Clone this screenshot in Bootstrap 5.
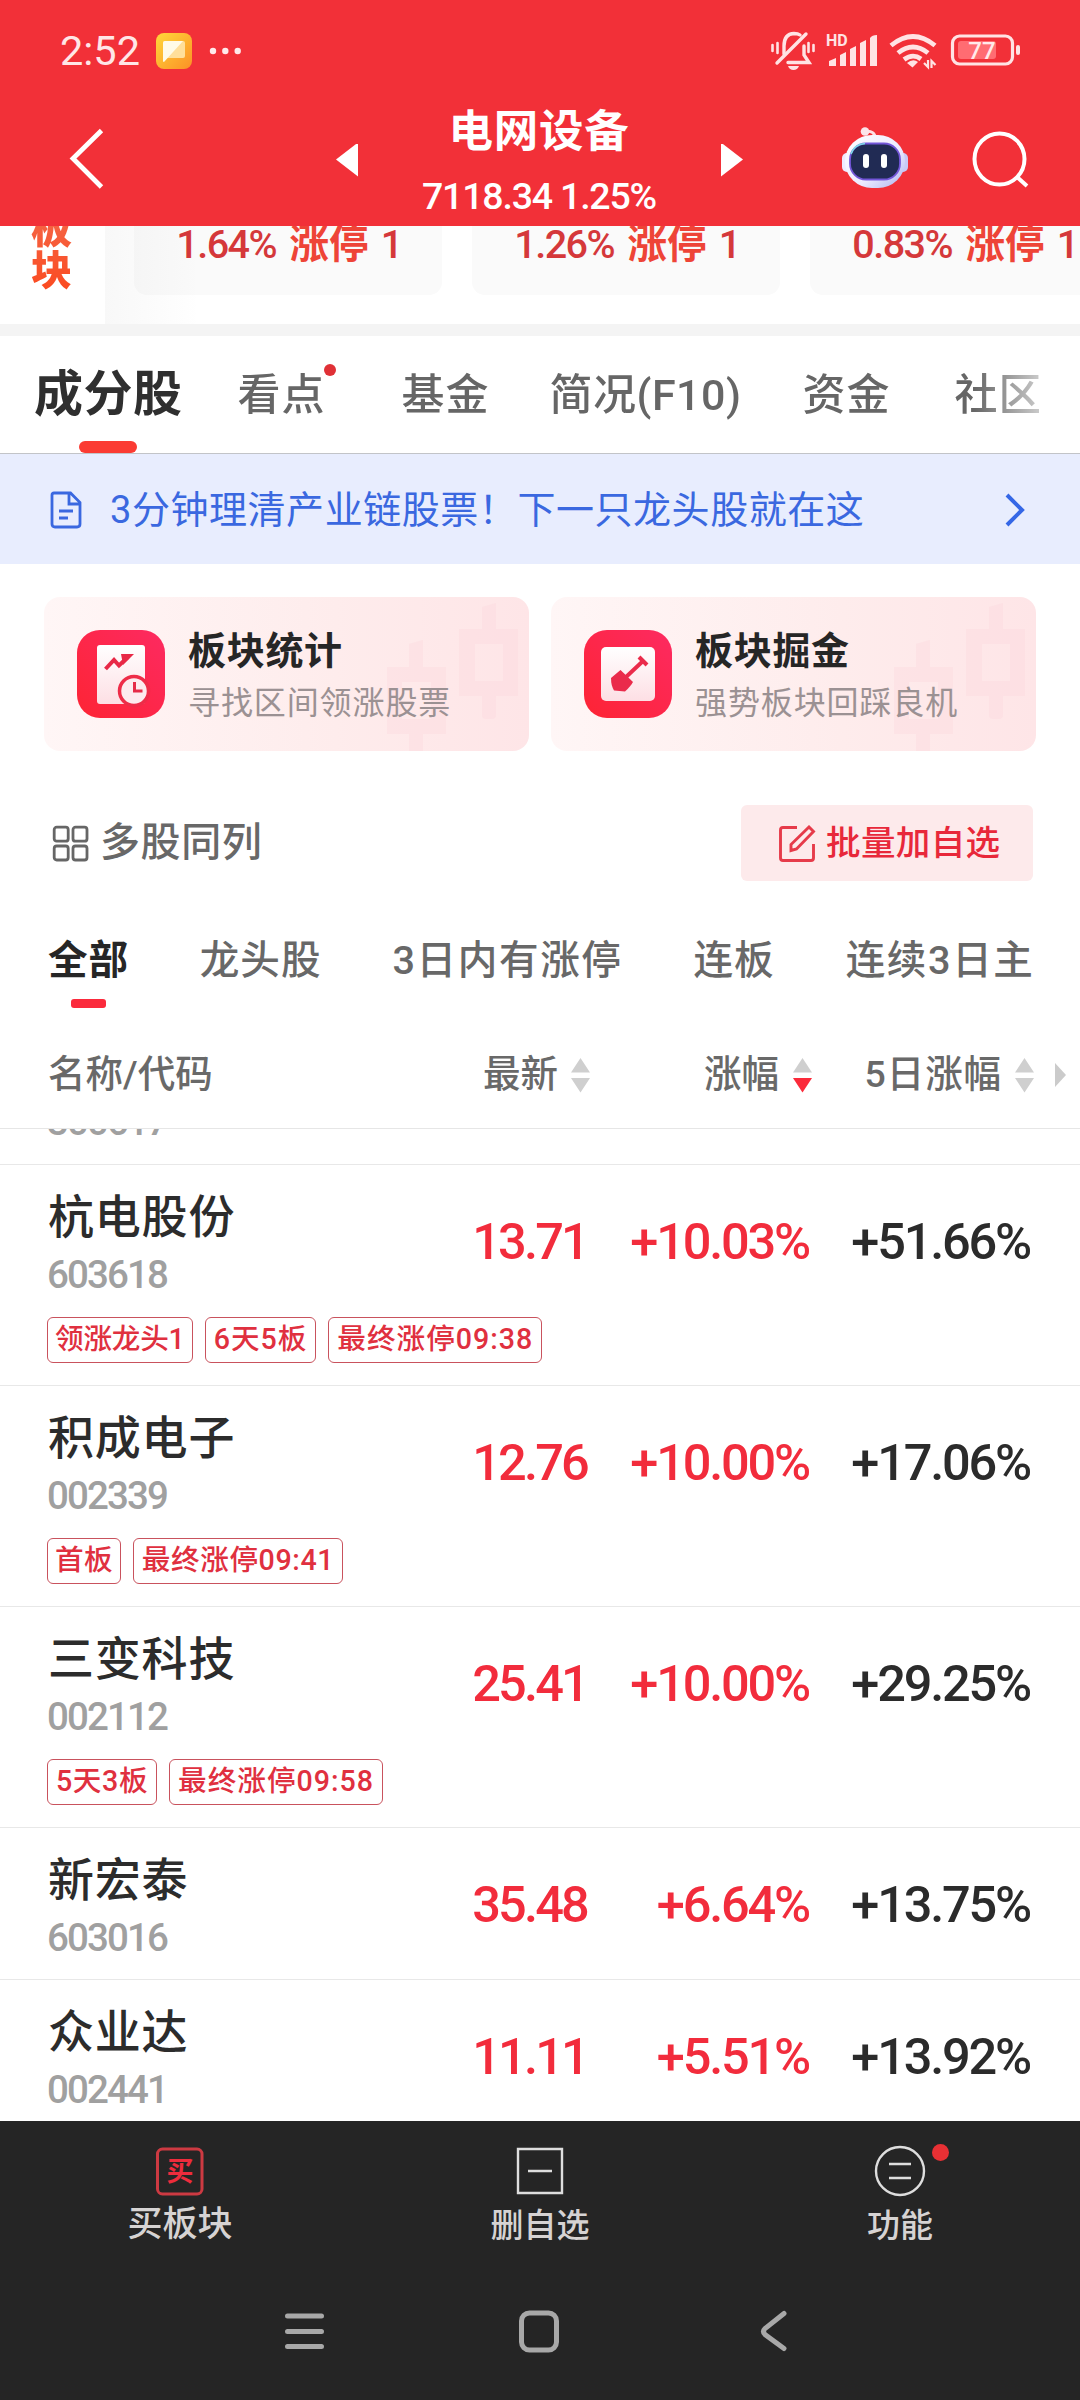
<!DOCTYPE html>
<html lang="zh-CN">
<head>
<meta charset="utf-8">
<meta name="viewport" content="width=device-width, initial-scale=1">
<title>电网设备</title>
<link href="https://cdn.jsdelivr.net/npm/bootstrap@5.3.0/dist/css/bootstrap.min.css" rel="stylesheet">
<style>
  body{font-family:Roboto,"Noto Sans CJK SC",sans-serif;width:1080px;height:2400px;overflow:hidden;color:#2b2b2b;background:#fff;white-space:nowrap}
  svg{display:block;flex:none}
  .app{width:1080px;height:2400px;overflow:hidden}
  .top-area{background:#f23038;height:226px;flex:none;color:#fff}
  .status{height:98px;padding:3px 60px 0 60px}
  .clock{font-size:41.5px;line-height:50px;color:#ffe6e7;width:96px}
  .title-row{height:128px;padding-left:64px}
  .title-col{width:250px;margin:0 57px 0 56px}
  .title-main{font-size:44.5px;line-height:64px;font-weight:700;letter-spacing:.8px;padding-top:3px}
  .title-sub{font-size:37.5px;line-height:64px;font-weight:500;letter-spacing:-1.2px}
  .strip{height:98px;flex:none;position:relative}
  .strip-label{width:105px;padding-left:31px;font-size:41px;line-height:42px;font-weight:900;margin-top:-18px;height:84px;white-space:normal;flex:none}
  .strip-label span{display:block;width:42px;background:linear-gradient(#f4684a,#fb4a20);-webkit-background-clip:text;color:transparent}
  .strip-card{width:308px;height:69px;background:#fafafa;border-radius:0 0 13px 13px;text-align:center;font-size:39.5px;line-height:38px;color:#d5383a;letter-spacing:-1.5px;flex:none;font-weight:500;overflow:hidden;padding-left:2px}
  .strip-card b{color:#ee4437;font-weight:700;letter-spacing:0;margin:0 4px 0 5px}
  .strip-shade{position:absolute;left:105px;top:0;width:95px;height:98px;background:linear-gradient(90deg,rgba(120,120,120,.05),rgba(120,120,120,0));pointer-events:none}
  .divider-band{height:12px;background:#f4f4f4;flex:none}
  .tabs-main{height:118px;border-bottom:1px solid #c2c4c8;flex:none;padding-left:34px;width:1080px}
  .tabs-clip{width:1005px;overflow:hidden;height:117px;-webkit-mask-image:linear-gradient(90deg,#000 940px,rgba(0,0,0,.35) 1005px);mask-image:linear-gradient(90deg,#000 940px,rgba(0,0,0,.35) 1005px)}
  .tab-i{font-size:43px;letter-spacing:1px;line-height:60px;margin-top:29px;color:#666;font-weight:500;position:relative;flex:none}
  .tab-i.on{font-size:49px;font-weight:700;color:#2f2f2f;letter-spacing:.5px}
  .tab-i.on:after{content:"";position:absolute;left:45px;top:76px;width:58px;height:12px;border-radius:6px;background:#fb3b33}
  .dot-s{position:absolute;width:12px;height:12px;border-radius:50%;background:#e03036;right:-10px;top:-1px}
  .banner-b{height:110px;background:#e8edfe;color:#3a68e0;font-size:38px;letter-spacing:.55px;flex:none;padding:2px 54px 0 50px}
  .promo{width:485px;height:154px;border-radius:16px;background:linear-gradient(90deg,#fff6f6,#feecec 60%,#fee5e7);position:relative;padding-left:33px}
  .promo .wm{position:absolute;right:0;top:0}
  .promo-t{font-size:38px;letter-spacing:.7px;font-weight:700;line-height:52px;color:#262626}
  .promo-s{font-size:32px;letter-spacing:.9px;line-height:52px;color:#9b9193}
  .tools{height:76px;padding:0 47px 0 52px;margin-top:54px;flex:none}
  .multi{font-size:40px;letter-spacing:.6px;color:#686868;font-weight:500}
  .btn-add{width:292px;height:76px;background:#fdeaeb;border-radius:6px;color:#e8283a;font-size:34.5px;font-weight:500;letter-spacing:.4px;border:0;padding:2px 0 0 37px}
  .filters{height:104px;padding-left:48px;margin-top:50px;flex:none;gap:71px;font-size:39.6px;letter-spacing:1px;line-height:60px;color:#686868;font-weight:500}
  .filters .wide{letter-spacing:1.6px}
  .filters .on{font-weight:700;color:#262626;position:relative;letter-spacing:.8px}
  .filters .on:after{content:"";position:absolute;left:23px;top:68px;width:35px;height:9px;border-radius:3px;background:#fb2a3c}
  .thead{height:94px;border-bottom:1px solid #e6e6e6;font-size:37.5px;color:#696969;flex:none;padding-left:48px;padding-bottom:14px;font-weight:500}
  .c1{width:292px;text-align:right}.c2{width:222px;text-align:right}.c3{width:222px;text-align:right}
  .prev-row{height:36px;border-bottom:1px solid #e8e8e8;overflow:hidden;flex:none}
  .stk{border-bottom:1px solid #e8e8e8;padding:22px 0 0 48px;height:152px;flex:none}
  .stk.tall{height:221px}
  .n1{font-size:46px;letter-spacing:.8px;line-height:60px;font-weight:500;color:#2c2c2c;width:250px}
  .n2{font-size:38.5px;line-height:54px;color:#a0a0a0;letter-spacing:-1.9px;font-weight:500;padding-top:1px;margin-left:-1px}
  .num{font-size:50.5px;font-weight:500;letter-spacing:-2.2px;line-height:60px;padding:0 4px 5px 0;color:#2b2b2b}
  .num.c1,.num.c2{color:#f22c3c}
  .stk .num.c1{width:294px;letter-spacing:-2.8px;padding-right:5px}
  .stk .num.c2{width:220px;padding-right:3px}
  .pill{border:1.5px solid #c9525d;border-radius:6px;height:46px;line-height:42px;padding:0 8px;font-size:28.6px;color:#e0303f;letter-spacing:1px;font-weight:500}
  .pill.cj{letter-spacing:.3px;padding:0 7px}
  .pill.lead1{letter-spacing:-.2px;padding:0 7px}
  .bottom{background:#252525;height:279px;position:absolute;left:0;top:2121px;width:1080px}
  .bt{width:360px;color:#d6d3d3;font-weight:500;position:relative}
  .bt div{line-height:44px}
</style>
</head>
<body>
<div class="app d-flex flex-column position-relative">
  <header class="top-area">
    <div class="status d-flex align-items-center">
      <span class="clock">2:52</span>
      <svg width="36" height="36" viewBox="0 0 36 36"><defs><linearGradient id="ye" x1="0" y1="0" x2="1" y2="1"><stop offset="0" stop-color="#ffd83a"/><stop offset="1" stop-color="#fc9026"/></linearGradient></defs><rect width="36" height="36" rx="8" fill="url(#ye)"/><rect x="7" y="8" width="22" height="17" rx="2" fill="#ffdf9a"/><path d="M9 8h18L8 29q-1 0-1-1V10q0-2 2-2z" fill="#fffbe8"/></svg>
      <svg class="ms-3" width="36" height="8" viewBox="0 0 36 8"><g fill="#ffe9ea"><circle cx="5" cy="4" r="3.2"/><circle cx="17.3" cy="4" r="3.2"/><circle cx="29.7" cy="4" r="3.2"/></g></svg>
      <svg class="ms-auto" width="250" height="44" viewBox="770 29 250 44">
        <g stroke="#ffe3e4" fill="none" stroke-width="3.4" stroke-linecap="round">
          <path d="M784 54V46q0-12 10-12.500q4 0 6 1.500M804 46v9l5 7.500H788"/><path d="M777 63L806 34"/>
          <path d="M772.500 45v6M777.500 43v10M808.500 43v9M813.500 45v6" stroke-width="2.600"/>
        </g>
        <path d="M788 66h11q-1.500 4-5.500 4t-5.500-4z" fill="#ffe3e4"/>
        <text x="826" y="46" font-family="Roboto" font-weight="700" font-size="16" fill="#ffe3e4">HD</text>
        <g fill="#ffe3e4"><path d="M829 61l7-3v8h-7zM840 55l6-3v14h-6zM850 49l6-3v20h-6zM860 43l6-3v26h-6zM870 38q2-3 7-3v31h-7z"/></g>
        <g fill="none" stroke="#ffe3e4" stroke-width="4.800"><path d="M891 45.500Q913 27.500 935 45.500"/><path d="M898 53Q913 41 928 53"/><path d="M904 59.500Q913 53 921 59"/></g>
        <path d="M907 63q6-5 11-1l-5.500 5.500z" fill="#ffe3e4"/><path d="M928 60v7l-4-4M931.500 68v-7l4 4" stroke="#ffe3e4" stroke-width="2.200" fill="none"/>
        <rect x="952.500" y="36" width="60" height="28" rx="7" fill="none" stroke="#ffe3e4" stroke-width="3.200"/>
        <rect x="958" y="41" width="38" height="18" rx="3" fill="#ff6c72"/><rect x="1016" y="45" width="4" height="10" rx="2" fill="#ffe3e4"/>
        <text x="982" y="59" text-anchor="middle" font-family="Roboto" font-weight="500" font-size="24" fill="#ffe9ea">77</text>
      </svg>
    </div>
    <div class="title-row d-flex align-items-center">
      <svg width="46" height="80" viewBox="64 122 46 80"><path d="M101.500 130.500L73 158.500L101.500 187" fill="none" stroke="#fff" stroke-width="4.800"/></svg>
      <svg width="22" height="36" viewBox="0 0 22 36" style="margin-left:226px"><path d="M0 15.500L22-1.500v34z" fill="#fff"/></svg>
      <div class="title-col text-center">
        <div class="title-main">电网设备</div>
        <div class="title-sub">7118.34 1.25%</div>
      </div>
      <svg width="22" height="36" viewBox="0 0 22 36"><path d="M22 15.500L0-1.500v34z" fill="#fff"/></svg>
      <svg width="68" height="72" viewBox="0 0 68 72" style="margin-left:98px"><defs><linearGradient id="rb" x1="0" y1="0" x2="1" y2="1"><stop offset="0" stop-color="#fff"/><stop offset=".6" stop-color="#eceaff"/><stop offset="1" stop-color="#aab2ee"/></linearGradient></defs>
        <path d="M24 5.500Q34 4 34.500 13" fill="none" stroke="#ffdfe4" stroke-width="3"/><circle cx="24" cy="5.500" r="4.300" fill="#fbe4ea"/>
        <rect x="1" y="27" width="10" height="19" rx="5" fill="#eeeaff"/><rect x="57" y="27" width="10" height="19" rx="5" fill="#c8c9f6"/>
        <rect x="4" y="9" width="60" height="53" rx="27" fill="url(#rb)"/>
        <rect x="9" y="17.500" width="50" height="36" rx="16" fill="#212b54" stroke="#7356d8" stroke-width="1.800"/><path d="M10 28Q13 18.500 24 17.500" stroke="#7bdde5" stroke-width="1.500" fill="none"/>
        <rect x="22" y="28" width="6" height="14" rx="3" fill="#fff"/><rect x="40" y="28" width="6" height="14" rx="3" fill="#fff"/></svg>
      <svg width="64" height="72" viewBox="0 0 64 72" style="margin-left:59px"><ellipse cx="31.500" cy="33" rx="25" ry="25.500" fill="none" stroke="#fff" stroke-width="4"/><path d="M49 51l10 9" stroke="#fff" stroke-width="4"/></svg>
    </div>
  </header>

  <section class="strip d-flex overflow-hidden">
    <div class="strip-label"><span>板<br>块</span></div>
    <div class="d-flex" style="gap:30px;margin-left:29px">
      <div class="strip-card">1.64% <b>涨停</b> 1</div>
      <div class="strip-card">1.26% <b>涨停</b> 1</div>
      <div class="strip-card">0.83% <b>涨停</b> 1</div>
    </div>
    <div class="strip-shade"></div>
  </section>
  <div class="divider-band"></div>

  <nav class="tabs-main">
    <div class="tabs-clip d-flex">
      <div class="tab-i on">成分股</div>
      <div class="tab-i" style="margin-left:55px">看点<i class="dot-s"></i></div>
      <div class="tab-i" style="margin-left:76px">基金</div>
      <div class="tab-i" style="margin-left:60px;letter-spacing:.5px">简况(F10)</div>
      <div class="tab-i" style="margin-left:61px">资金</div>
      <div class="tab-i" style="margin-left:64px">社区</div>
    </div>
  </nav>

  <div class="banner-b d-flex align-items-center">
    <svg width="32" height="38" viewBox="0 0 32 38"><path d="M4 2h16.500L30 11.500V33q0 3-3 3H5q-3 0-3-3V4q0-2 2-2zM19 2v11h11M9 20h14M9 27h9" fill="none" stroke="#3a68e0" stroke-width="2.800"/></svg>
    <span style="margin-left:28px">3分钟理清产业链股票！下一只龙头股就在这</span>
    <svg class="ms-auto" width="22" height="36" viewBox="0 0 22 36"><path d="M3 3l15 15L3 33" fill="none" stroke="#3567e6" stroke-width="4"/></svg>
  </div>

  <section class="d-flex flex-shrink-0" style="gap:22px;padding:33px 44px 0">
    <div class="promo d-flex align-items-center">
      <svg class="wm" width="160" height="154" viewBox="325 0 160 154"><g fill="#fdd5d9" fill-opacity=".3"><path fill-rule="evenodd" d="M415 32h59v67h-59zM431 47h28v37h-28zM343 70h59v67h-59zM358 85h29v37h-29z"/><path d="M438 10l14-4v26h-14zM438 99h14v19q0 4-4 4h-6q-4 0-4-4zM365 47l14-4v27h-14zM365 137h14v17h-14z"/></g></svg>
      <svg width="88" height="88" viewBox="0 0 88 88"><defs><linearGradient id="rg" x1="0" y1="1" x2="1" y2="0"><stop offset="0" stop-color="#fd2434"/><stop offset="1" stop-color="#fd2a61"/></linearGradient><linearGradient id="wg" x1="0" y1="0" x2="0" y2="1"><stop offset="0" stop-color="#fff"/><stop offset="1" stop-color="#fddfe4"/></linearGradient></defs><rect width="88" height="88" rx="23" fill="url(#rg)"/><rect x="20" y="15" width="48" height="59" rx="3" fill="url(#wg)"/><path d="M28.500 39l8.500-9 5 5.500 9-8.500" fill="none" stroke="#e82947" stroke-width="4"/><path d="M44 24h13L46 35z" fill="#e82947"/><circle cx="57" cy="61" r="14.500" fill="#fdebee" stroke="#ee2c48" stroke-width="3.500"/><path d="M57.500 52v9h8" fill="none" stroke="#e52b47" stroke-width="3"/></svg>
      <div class="position-relative" style="margin-left:23px;padding-top:5px"><div class="promo-t">板块统计</div><div class="promo-s">寻找区间领涨股票</div></div>
    </div>
    <div class="promo d-flex align-items-center">
      <svg class="wm" width="160" height="154" viewBox="325 0 160 154"><g fill="#fdd5d9" fill-opacity=".3"><path fill-rule="evenodd" d="M415 32h59v67h-59zM431 47h28v37h-28zM343 70h59v67h-59zM358 85h29v37h-29z"/><path d="M438 10l14-4v26h-14zM438 99h14v19q0 4-4 4h-6q-4 0-4-4zM365 47l14-4v27h-14zM365 137h14v17h-14z"/></g></svg>
      <svg width="88" height="88" viewBox="0 0 88 88"><rect width="88" height="88" rx="23" fill="url(#rg)"/><rect x="17" y="17" width="54" height="54" rx="5" fill="url(#wg)"/><path d="M42 47L59 31" stroke="#ea2b4b" stroke-width="4"/><path d="M55 27l8 8" stroke="#ea2b4b" stroke-width="4"/><path d="M36.500 40L49 52q-2 4-8 9.500l-11-1q-3-5-3-12.500z" fill="#ea2b4b"/></svg>
      <div class="position-relative" style="margin-left:23px;padding-top:5px"><div class="promo-t">板块掘金</div><div class="promo-s">强势板块回踩良机</div></div>
    </div>
  </section>

  <div class="tools d-flex align-items-center justify-content-between">
    <div class="multi d-flex align-items-center"><svg width="37" height="37" viewBox="0 0 37 37" style="margin-right:11px"><g fill="none" stroke="#666" stroke-width="2.800"><rect x="2.200" y="2.200" width="14" height="14" rx="2.500"/><rect x="21" y="2.200" width="14" height="14" rx="2.500"/><rect x="2.200" y="21" width="14" height="14" rx="2.500"/><rect x="21" y="21" width="14" height="14" rx="2.500"/></g></svg>多股同列</div>
    <button class="btn-add d-flex align-items-center"><svg width="38" height="38" viewBox="0 0 38 38" style="margin-right:10px"><g fill="none" stroke="#e63b4a" stroke-width="2.900"><path d="M19 2.500H5q-2.500 0-2.500 2.500v28q0 2.500 2.500 2.500h28q2.500 0 2.500-2.500V19"/><path d="M13 25.500v-6L31 2l4.500 4.500L18.500 24z"/></g></svg>批量加自选</button>
  </div>

  <div class="filters d-flex">
    <span class="on">全部</span><span>龙头股</span><span class="wide">3日内有涨停</span><span>连板</span><span class="wide">连续3日主</span>
  </div>

  <div class="thead d-flex align-items-center">
    <span style="width:250px">名称/代码</span>
    <span class="c1 d-flex justify-content-end align-items-center">最新<svg width="19" height="36" viewBox="0 0 19 36" style="margin-left:13px"><path d="M9.500 1L19 15.500H0zM9.500 35.500L0 21h19z" fill="#cfcfcf"/></svg></span>
    <span class="c2 d-flex justify-content-end align-items-center">涨幅<svg width="19" height="36" viewBox="0 0 19 36" style="margin-left:14px"><path d="M9.500 1L19 15.500H0z" fill="#cfcfcf"/><path d="M9.500 35.500L0 21h19z" fill="#fb2a3a"/></svg></span>
    <span class="c3 d-flex justify-content-end align-items-center" style="letter-spacing:.9px">5日涨幅<svg width="19" height="36" viewBox="0 0 19 36" style="margin-left:13px"><path d="M9.500 1L19 15.500H0zM9.500 35.500L0 21h19z" fill="#cfcfcf"/></svg></span>
    <svg width="11" height="24" viewBox="0 0 11 24" style="margin-left:21px"><path d="M0 0l11 12L0 24z" fill="#cbcbcb"/></svg>
  </div>

  <div class="prev-row"><div class="n2" style="margin:-35px 0 0 47px">300617</div></div>

  <div class="stk tall">
    <div class="d-flex align-items-center"><div><div class="n1">杭电股份</div><div class="n2">603618</div></div><div class="num c1">13.71</div><div class="num c2">+10.03%</div><div class="num c3">+51.66%</div></div>
    <div class="d-flex" style="gap:12px;margin:15px 0 0 -1px"><span class="pill lead1">领涨龙头1</span><span class="pill">6天5板</span><span class="pill">最终涨停09:38</span></div>
  </div>
  <div class="stk tall">
    <div class="d-flex align-items-center"><div><div class="n1">积成电子</div><div class="n2">002339</div></div><div class="num c1">12.76</div><div class="num c2">+10.00%</div><div class="num c3">+17.06%</div></div>
    <div class="d-flex" style="gap:12px;margin:15px 0 0 -1px"><span class="pill cj">首板</span><span class="pill" style="letter-spacing:.6px">最终涨停09:41</span></div>
  </div>
  <div class="stk tall">
    <div class="d-flex align-items-center"><div><div class="n1">三变科技</div><div class="n2">002112</div></div><div class="num c1">25.41</div><div class="num c2">+10.00%</div><div class="num c3">+29.25%</div></div>
    <div class="d-flex" style="gap:12px;margin:15px 0 0 -1px"><span class="pill" style="letter-spacing:.6px">5天3板</span><span class="pill">最终涨停09:58</span></div>
  </div>
  <div class="stk">
    <div class="d-flex align-items-center"><div><div class="n1">新宏泰</div><div class="n2">603016</div></div><div class="num c1">35.48</div><div class="num c2">+6.64%</div><div class="num c3">+13.75%</div></div>
  </div>
  <div class="stk">
    <div class="d-flex align-items-center"><div><div class="n1">众业达</div><div class="n2">002441</div></div><div class="num c1">11.11</div><div class="num c2">+5.51%</div><div class="num c3">+13.92%</div></div>
  </div>

  <footer class="bottom">
    <div class="d-flex text-center" style="height:180px;padding-top:24px">
      <div class="bt"><svg class="mx-auto" width="52" height="52" viewBox="0 0 52 52"><rect x="3.500" y="4" width="44.500" height="45" rx="5" fill="none" stroke="#cd3a42" stroke-width="3"/><text x="26" y="36" text-anchor="middle" font-family="Noto Sans CJK SC" font-weight="700" font-size="27" fill="#ee2c3c">买</text></svg><div style="font-size:35px;margin-top:6px">买板块</div></div>
      <div class="bt"><svg class="mx-auto" width="52" height="52" viewBox="0 0 52 52"><path d="M4 4h44v44H4zM14 26h24" fill="none" stroke="#dedede" stroke-width="2.400"/></svg><div style="font-size:33px;margin-top:7px">删自选</div></div>
      <div class="bt"><svg class="mx-auto" width="52" height="52" viewBox="0 0 52 52"><circle cx="26" cy="26" r="24" fill="none" stroke="#dedede" stroke-width="2.400"/><path d="M15 19h22M15 33h22" stroke="#dedede" stroke-width="2.600"/></svg><i class="position-absolute rounded-circle" style="width:17px;height:17px;background:#e83034;left:212px;top:-1px"></i><div style="font-size:33px;margin-top:7px">功能</div></div>
    </div>
    <div class="d-flex" style="padding:7px 0 0 283px">
      <svg width="42" height="46" viewBox="0 0 42 46"><path d="M4.500 8h34M4.500 23.500h34M4.500 38.500h34" stroke="#a8a8a8" stroke-width="5" stroke-linecap="round"/></svg>
      <svg width="44" height="46" viewBox="0 0 44 46" style="margin-left:192px"><rect x="4.500" y="5" width="35" height="37" rx="8" fill="none" stroke="#a8a8a8" stroke-width="5"/></svg>
      <svg width="30" height="46" viewBox="0 0 30 46" style="margin-left:198px"><path d="M25 5.500L6 20.500q-3 3 0 6L25 40.500" fill="none" stroke="#a8a8a8" stroke-width="5" stroke-linecap="round"/></svg>
    </div>
  </footer>
</div>
<script src="https://cdn.jsdelivr.net/npm/bootstrap@5.3.0/dist/js/bootstrap.bundle.min.js"></script>
</body>
</html>
